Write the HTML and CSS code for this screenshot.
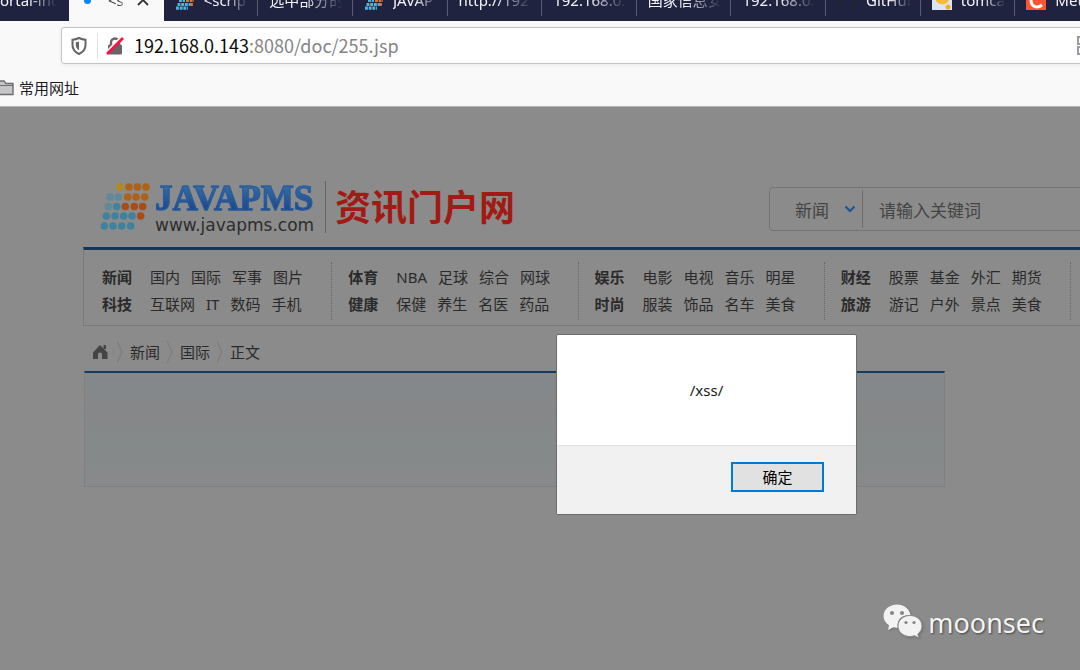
FILE: index.html
```html
<!DOCTYPE html>
<html lang="zh-CN">
<head>
<meta charset="utf-8">
<title>192.168.0.143:8080/doc/255.jsp</title>
<link rel="stylesheet" href="styles.css">
</head>
<body>
<svg class="defs" aria-hidden="true">
  <symbol id="dots" viewBox="0 0 50 48">
    <g fill="#b08a20"><circle cx="20" cy="5" r="3.8"/></g>
    <g fill="#ad6218"><circle cx="29" cy="5" r="3.8"/><circle cx="37.500" cy="5" r="3.8"/><circle cx="46" cy="5" r="3.800"/>
    <circle cx="27.700" cy="15" r="3.800"/><circle cx="36" cy="15" r="3.800"/><circle cx="44.700" cy="15" r="3.800"/></g>
    <g fill="#a84d18"><circle cx="25.300" cy="24.500" r="3.800"/><circle cx="34.300" cy="24.500" r="3.800"/><circle cx="42.700" cy="24.500" r="3.800"/><circle cx="40.700" cy="34" r="3.800"/></g>
    <g fill="#5f8a9a"><circle cx="10" cy="15" r="3.800"/><circle cx="18.300" cy="15" r="3.800"/><circle cx="8.300" cy="24.500" r="3.800"/></g>
    <g fill="#3f829f"><circle cx="16.700" cy="24.500" r="3.800"/><circle cx="6.300" cy="34" r="3.800"/><circle cx="15" cy="34" r="3.800"/><circle cx="23.700" cy="34" r="3.800"/><circle cx="32" cy="34" r="3.800"/><circle cx="4.300" cy="44" r="3.800"/><circle cx="13" cy="44" r="3.800"/><circle cx="21.700" cy="44" r="3.800"/><circle cx="30.700" cy="44" r="3.800"/></g>
  </symbol>
  <symbol id="fav" viewBox="0 0 20 20">
    <g stroke-width="3.200" stroke-dasharray="2.900 .8">
      <path d="M7 3h12M6 7h12" stroke="#f08030"/>
      <path d="M4 10.500h6M2.500 14.500h14M1 18.200h12" stroke="#4fb4dc"/>
      <path d="M11 10.500h8M15 14.500h3" stroke="#e8702a"/>
    </g>
  </symbol>
  <symbol id="chev" viewBox="0 0 8 24"><path d="M1 1l5 11-5 11" fill="none" stroke="#787878"/></symbol>
</svg>

<header class="browser">
  <nav class="tabs" aria-label="标签页">
    <a class="tab tab-first" href="#"><span class="tab-title">ortal-inde</span></a>
    <div class="tab-row">
      <a class="tab active" href="#"><i class="loading"></i><span class="tab-title">&lt;s</span><svg class="close" viewBox="0 0 12 12"><path d="M1 1l10 10M11 1L1 11" stroke="#333" stroke-width="1.800"/></svg></a>
      <a class="tab" href="#"><svg class="fav"><use href="#fav"/></svg><span class="tab-title">&lt;scrip</span></a>
      <a class="tab" href="#"><span class="tab-title">选中部分的</span></a>
      <a class="tab" href="#"><svg class="fav"><use href="#fav"/></svg><span class="tab-title">JAVAP</span></a>
      <a class="tab" href="#"><span class="tab-title">http://192</span></a>
      <a class="tab" href="#"><span class="tab-title">192.168.0.</span></a>
      <a class="tab" href="#"><span class="tab-title">国家信息安</span></a>
      <a class="tab" href="#"><span class="tab-title">192.168.0.</span></a>
      <a class="tab" href="#"><svg class="fav" viewBox="0 0 20 20"><path d="M7 18C-1 14 0 2 10 1.500S21 14 13 18" fill="none" stroke="#20262f" stroke-width="3.500"/></svg><span class="tab-title">GitHub</span></a>
      <a class="tab" href="#"><svg class="fav" viewBox="0 0 20 20"><path d="M0 0h20v20H0z" fill="#dbe5f4"/><path d="M3 8c1 7 9 8 13 4l2-5-4-5z" fill="#f8bc32"/><circle cx="16" cy="17" r="2.500" fill="#f5ad22"/></svg><span class="tab-title">tomca</span></a>
      <a class="tab" href="#"><svg class="fav" viewBox="0 0 20 20"><path d="M0 0h20v20H0z" fill="#fc5531"/><path d="M15 4C9 1 5 5 5 10c0 8 7 8 11 5" fill="none" stroke="#fff" stroke-width="3"/></svg><span class="tab-title">Metas</span></a>
    </div>
  </nav>
  <div class="urlbar">
    <svg class="shield" viewBox="0 0 18 20"><path d="M9 2c2 1 4 1.500 6.500 1.700V9c0 4-2.500 7-6.500 9-4-2-6.500-5-6.500-9V3.700C5 3.500 7 3 9 2z" fill="none" stroke="#666" stroke-width="2"/><path d="M9 5.500v8.700C7 13 5.800 11.300 5.800 9V6.300C7 6.200 8 6 9 5.500z" fill="#666"/></svg>
    <span class="url-rule"></span>
    <svg class="lock" viewBox="0 0 20 20"><path d="M6 10V6.500a4 4 0 0 1 8 0V10" fill="none" stroke="#666" stroke-width="2.400"/><rect x="3" y="8.500" width="14" height="10" rx="1.500" fill="#666"/><path d="M1 17L17 1" stroke="#fff" stroke-width="3"/><path d="M2 18L18 2" stroke="#ff0f45" stroke-width="2.600"/></svg>
    <div class="url"><b>192.168.0.143</b>:8080/doc/255.jsp</div>
    <svg class="qr" viewBox="0 0 18 20"><path d="M1 1h7v7H1zM1 11h7v7H1zM11 1h7v7h-7z" fill="none" stroke="#999aa2" stroke-width="2"/></svg>
  </div>
  <div class="bookmarks">
    <svg class="folder" viewBox="0 0 18 18"><path d="M1 15.500V2h7l2 2.500h7v11z" fill="#c6c6c8" stroke="#6e6e70" stroke-width="1.400"/><path d="M1 6.500h16" stroke="#6e6e70"/></svg>
    <a href="#">常用网址</a>
  </div>
</header>

<main class="page">
  <div class="masthead">
    <a class="logo" href="#">
      <svg class="logo-dots"><use href="#dots"/></svg>
      <span class="brand"><strong>JAVAPMS</strong><small>www.javapms.com</small></span>
      <span class="portal">资讯门户网</span>
    </a>
    <form class="search">
      <label class="kind"><select aria-label="栏目"><option>新闻</option></select><svg viewBox="0 0 12 8"><path d="M1.500 1.500L6 6l4.500-4.500" fill="none" stroke="#1b5392" stroke-width="2"/></svg></label>
      <input type="text" aria-label="关键词" placeholder="请输入关键词">
    </form>
  </div>

  <nav class="channels" aria-label="频道">
    <div class="group">
      <div class="line"><a class="head" href="#">新闻</a><a href="#">国内</a><a href="#">国际</a><a href="#">军事</a><a href="#">图片</a></div>
      <div class="line"><a class="head" href="#">科技</a><a href="#">互联网</a><a href="#">IT</a><a href="#">数码</a><a href="#">手机</a></div>
    </div>
    <div class="group">
      <div class="line"><a class="head" href="#">体育</a><a href="#">NBA</a><a href="#">足球</a><a href="#">综合</a><a href="#">网球</a></div>
      <div class="line"><a class="head" href="#">健康</a><a href="#">保健</a><a href="#">养生</a><a href="#">名医</a><a href="#">药品</a></div>
    </div>
    <div class="group">
      <div class="line"><a class="head" href="#">娱乐</a><a href="#">电影</a><a href="#">电视</a><a href="#">音乐</a><a href="#">明星</a></div>
      <div class="line"><a class="head" href="#">时尚</a><a href="#">服装</a><a href="#">饰品</a><a href="#">名车</a><a href="#">美食</a></div>
    </div>
    <div class="group">
      <div class="line"><a class="head" href="#">财经</a><a href="#">股票</a><a href="#">基金</a><a href="#">外汇</a><a href="#">期货</a></div>
      <div class="line"><a class="head" href="#">旅游</a><a href="#">游记</a><a href="#">户外</a><a href="#">景点</a><a href="#">美食</a></div>
    </div>
  </nav>

  <nav class="crumbs" aria-label="位置">
    <a href="#" aria-label="首页"><svg class="home" viewBox="0 0 16 16"><path d="M8 1l7.500 7.500V15H10v-4.500a2 2 0 0 0-4 0V15H1V8.500z" fill="#444"/><path d="M11.500 1h2.500v4h-2.500z" fill="#444"/></svg></a>
    <svg class="chev"><use href="#chev"/></svg><a href="#">新闻</a>
    <svg class="chev"><use href="#chev"/></svg><a href="#">国际</a>
    <svg class="chev"><use href="#chev"/></svg><span>正文</span>
  </nav>
  <article class="article"></article>

  <div class="dialog" role="alertdialog" aria-labelledby="msg">
    <p id="msg">/xss/</p>
    <div class="actions"><button type="button">确定</button></div>
  </div>

  <div class="watermark">
    <svg viewBox="0 0 40 34"><path d="M14 .5C6.500.5.5 5.500.5 12c0 4 2 7 5.500 9.500L5 26l5.500-2.700c1.500.4 3 .5 4.500.5C13 16 19 10.500 27.500 11 26.500 5 21 .5 14 .5z" fill="#f2f2f2"/><path d="M27 11.500c-6.500 0-12 4.500-12 10.500s5.500 10.500 12 10.500c1.500 0 3-.3 4.500-.8L36 34l-1.200-4c2.600-2 4.200-4.700 4.200-8 0-6-5.500-10.500-12-10.500z" fill="#f2f2f2" stroke="#8b8b8b"/><g fill="#858585"><circle cx="9" cy="9" r="2"/><circle cx="19" cy="9" r="2"/><circle cx="23" cy="18.500" r="1.600"/><circle cx="31" cy="18.500" r="1.600"/></g></svg>
    <span>moonsec</span>
  </div>
</main>
</body>
</html>
```
FILE: styles.css
```css
* { box-sizing: border-box; }
body {
  margin: 0;
  min-height: 100vh;
  display: flex;
  flex-direction: column;
  overflow: hidden;
  font: 15px/20px "Noto Sans", "Noto Sans CJK SC", sans-serif;
  background: #8b8b8b;
}
a { color: inherit; text-decoration: none; }
svg { flex: none; }
.defs { position: absolute; width: 0; height: 0; }

/* browser chrome */
.browser { background: #f9f9fa; border-bottom: 1px solid #b4b4b4; }
.tabs {
  display: flex;
  align-items: flex-end;
  height: 21px;
  overflow: hidden;
  background: #202340;
  color: #f4f4f8;
}
.tab-row {
  flex: 1;
  min-width: 0;
  display: grid;
  grid-template-columns: repeat(11, minmax(0, 1fr));
  margin-right: -30px;
}
.tab {
  position: relative;
  min-width: 0;
  height: 42px;
  padding: 0 10px 0 11px;
  display: flex;
  align-items: center;
  gap: 9px;
}
.tab-first { flex: 0 0 69px; padding: 0 12px 0 0; }
.tab::after {
  content: "";
  position: absolute;
  right: 0;
  bottom: 5px;
  width: 1px;
  height: 32px;
  background: #5a5b70;
}
.tab-first::after, .active::after { display: none; }
.tab-title {
  flex: 1;
  min-width: 0;
  overflow: hidden;
  white-space: nowrap;
  mask-image: linear-gradient(to right, #000 50%, transparent);
}
.active { background: #f9f9fa; color: #333; padding: 0 15px; }
.loading { flex: none; width: 7px; height: 7px; margin-right: 8px; border-radius: 50%; background: #0a84ff; }
.close { width: 12px; height: 12px; }
.fav { width: 20px; height: 20px; }

.urlbar {
  display: flex;
  align-items: center;
  height: 37px;
  margin: 6px -20px 0 61px;
  padding: 0 24px 0 8px;
  border: 1px solid #c4c4c6;
  border-radius: 3px;
  background: #fff;
  box-shadow: 0 1px 4px #0001;
}
.shield { width: 18px; height: 20px; }
.url-rule { width: 1px; height: 26px; margin: 0 7px 0 9px; background: #e2e2e4; }
.lock { width: 20px; height: 20px; }
.url { flex: 1; margin-left: 9px; padding-bottom: 2px; font-family: "Noto Sans CJK SC", sans-serif; font-size: 18px; color: #858585; }
.url b { font-weight: 400; color: #0c0c0d; }
.qr { width: 18px; height: 20px; margin-right: -20px; }
.bookmarks { display: flex; align-items: center; gap: 5px; height: 42px; padding-top: 6px; color: #1c1c1e; }
.folder { width: 18px; height: 18px; margin-left: -4px; }

/* site */
.page { position: relative; flex: 1; padding: 74px 0 0 83px; color: #2a2a2a; }
.masthead { display: flex; align-items: flex-start; justify-content: space-between; height: 66px; }
.logo { display: flex; align-items: flex-start; padding-left: 17px; height: 54px; }
.logo-dots { width: 50px; height: 48px; margin-top: 1px; }
.brand { display: flex; flex-direction: column; padding: 0 11px 0 5px; border-right: 1px solid #626262; }
.brand strong {
  font: 700 35px/36px "Liberation Serif", serif;
  color: #2a5c9c;
  background: linear-gradient(#34699f 20%, #1b478c 80%);
  background-clip: text;
  -webkit-text-fill-color: transparent;
  -webkit-text-stroke: 1px #2a5c9c;
}
.brand small { font: 17px/16px "DejaVu Sans", sans-serif; color: #2d2d2d; }
.portal { padding-left: 9px; font: 700 36px/48px "Noto Sans CJK SC", sans-serif; color: #a11b14; }
.search {
  display: flex;
  align-items: center;
  width: 331px;
  height: 44px;
  margin: 6px -20px 0 0;
  border: 1px solid #737373;
  border-radius: 4px;
}
.kind { display: flex; align-items: center; height: 38px; padding: 0 6px 0 25px; border-right: 1px solid #6e6e6e; }
.kind select { width: 49px; padding: 3px 0 0; border: 0; appearance: none; background: none; font: inherit; font-size: 17px; color: #444; }
.kind svg { width: 12px; height: 8px; }
.search input { flex: 1; min-width: 0; padding: 4px 16px 0; border: 0; background: none; font: inherit; font-size: 17px; }
.search input::placeholder { color: #444; }

.channels {
  display: grid;
  grid-template-columns: repeat(4, 1fr);
  margin-right: -4px;
  padding: 12px 12px 5px 2px;
  border: 1px solid #7a7a7a;
  border-top: 3px solid #143553;
}
.group { padding: 2px 0 2px 16px; border-right: 1px dotted #686868; }
.line { display: flex; gap: 11px; line-height: 27px; white-space: nowrap; }
.head { margin-right: 7px; font-weight: 700; }

.crumbs { display: flex; align-items: center; gap: 6px; height: 45px; padding: 6px 0 0 9px; }
.home { display: block; width: 16px; height: 16px; }
.chev { width: 8px; height: 24px; }
.crumbs .home { margin-right: 2px; }
.article {
  width: calc(100% - 136px);
  height: 116px;
  margin-left: 1px;
  border: 1px solid #808182;
  border-top: 2px solid #163b5b;
  background: linear-gradient(#83888c, #868788 35%, #84898a 60%, #88898a);
}

/* alert */
.dialog {
  position: absolute;
  left: 556px;
  top: 227px;
  width: 301px;
  border: 1px solid #6b6b6b;
  border-radius: 2px;
  background: #fff;
  color: #1a1a1a;
}
.dialog p { margin: 0; padding: 45px 0; text-align: center; }
.actions { display: flex; justify-content: flex-end; padding: 16px 32px 22px; border-top: 1px solid #e2e2e2; background: #f1f1f1; }
.actions button { width: 93px; height: 30px; padding: 0 0 1px; border: 2px solid #0078d7; background: #e1e1e1; font: inherit; color: #000; }

.watermark {
  position: absolute;
  right: 36px;
  bottom: 28px;
  display: flex;
  align-items: center;
  gap: 5px;
  font-size: 27px;
  line-height: 36px;
  color: #f4f4f4;
  text-shadow: 1px 1px 2px #444;
}
.watermark svg { width: 40px; height: 34px; margin-bottom: 4px; filter: drop-shadow(1px 1px 1px #5558); }
```
